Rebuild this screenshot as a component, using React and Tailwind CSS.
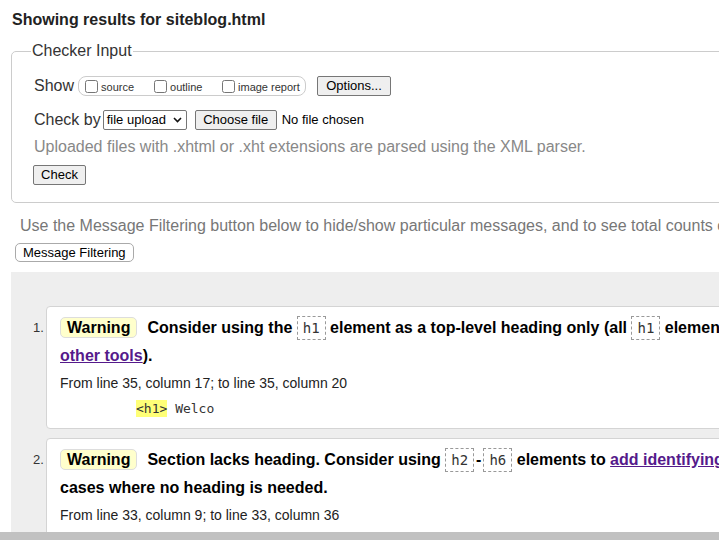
import React from 'react';

const Btn = ({ children, className = '' }) => (
    <button className={`h-[20px] border border-[#767676] bg-[#efefef] rounded-[2px] text-[13px] leading-[18px] text-black ${className}`}>
        {children}
    </button>
);

const Code = ({ children }) => (
    <code className="inline-block border border-dashed border-[#999] px-[5px] leading-[22px] text-[14px] font-normal text-[#333] font-['DejaVu_Sans_Mono',monospace]">
        {children}
    </code>
);

const Badge = () => (
    <span className="inline-block bg-[#ffffcc] border border-[#ddd] rounded-[5px] px-[6px] leading-[19px] mr-[10px]">Warning</span>
);

const Link = ({ children }) => (
    <a href="#" className="text-[#551a8b] underline">{children}</a>
);

const Message = ({ num, children, from, extract }) => (
    <li className="flex mb-[9px]">
        <span className="w-[13px] shrink-0 pt-[8px] text-[13px] leading-[28px] text-[#333]">{num}.</span>
        <div className="flex-1 bg-white border border-[#d4d4d4] rounded-[4px] pl-[13px] pt-[7px] pb-[10px]">
            <p className="font-bold text-[16px] leading-[28px] text-black whitespace-nowrap">{children}</p>
            <p className="mt-[4px] text-[14px] leading-[18px] text-[#222]">{from}</p>
            {extract && (
                <p className="mt-[8px] ml-[76px] text-[13px] leading-[18px] text-[#333] font-['DejaVu_Sans_Mono',monospace]">
                    <span className="bg-[#ffff77] py-[1px]">&lt;h1&gt;</span> {extract}
                </p>
            )}
        </div>
    </li>
);

export default function App() {
    return (
        <div className="w-[719px] h-[540px] overflow-hidden flex flex-col bg-white font-['Liberation_Sans',Arial,sans-serif] text-[#222]">
            <div className="flex-1 min-h-0 overflow-hidden">
                <div className="w-[1100px]">
                    {/* Title */}
                    <h2 className="pt-[10px] pl-[12px] text-[16px] font-bold leading-[20px] text-[#222]">Showing results for siteblog.html</h2>

                    {/* Checker input */}
                    <fieldset className="mt-[11px] ml-[11px] border border-[#ccc] rounded-[5px] pl-[22px] pb-[16px]">
                        <legend className="ml-[-3px] px-[1px] text-[16px] leading-[20px] text-[#333]">Checker Input</legend>

                        <div className="mt-[15px] flex items-center h-[20px]">
                            <span className="text-[16px] text-[#333]">Show</span>
                            <div className="ml-[4px] w-[228px] h-[20px] border border-[#ccc] rounded-[8px] flex items-center pl-[6px] text-[11px] text-[#333]">
                                <label className="w-[69px] flex items-center gap-[3px]"><input type="checkbox" className="w-[13px] h-[13px]" /><span className="mt-[3px]">source</span></label>
                                <label className="w-[68px] flex items-center gap-[3px]"><input type="checkbox" className="w-[13px] h-[13px]" /><span className="mt-[3px]">outline</span></label>
                                <label className="flex items-center gap-[3px]"><input type="checkbox" className="w-[13px] h-[13px]" /><span className="mt-[3px]">image report</span></label>
                            </div>
                            <Btn className="ml-[11px] w-[74px]">Options...</Btn>
                        </div>

                        <div className="mt-[14px] flex items-center h-[20px]">
                            <span className="text-[16px] text-[#333]">Check by</span>
                            <div className="ml-[2px] w-[84px] h-[20px] border border-[#767676] rounded-[2px] bg-white flex items-center justify-between pl-[3px] pr-[4px] text-[13px] text-black">
                                <span>file upload</span>
                                <svg width="9" height="6" viewBox="0 0 9 6" fill="none"><path d="M1 1l3.5 3.5L8 1" stroke="#111" strokeWidth="1.6" /></svg>
                            </div>
                            <Btn className="ml-[8px] w-[82px]">Choose file</Btn>
                            <span className="ml-[5px] text-[13px] text-black">No file chosen</span>
                        </div>

                        <p className="mt-[7px] text-[16px] leading-[20px] text-[#888]">Uploaded files with .xhtml or .xht extensions are parsed using the XML parser.</p>

                        <Btn className="mt-[8px] ml-[-1px] w-[53px]">Check</Btn>
                    </fieldset>

                    {/* Filtering */}
                    <p className="mt-[13px] pl-[20px] text-[16px] leading-[20px] text-[#777]">Use the Message Filtering button below to hide/show particular messages, and to see total counts of errors and warnings.</p>
                    <button className="mt-[7px] ml-[15px] h-[19px] px-[7px] border border-[#aaa] rounded-[5px] bg-white text-[13px] leading-[17px] text-black">Message Filtering</button>

                    {/* Results */}
                    <div className="mt-[8px] ml-[11px] bg-[#eeeeee] pt-[34px] pl-[22px] pb-[40px]">
                        <ol>
                            <Message
                                num={1}
                                from="From line 35, column 17; to line 35, column 20"
                                extract="Welco"
                            >
                                <Badge />Consider using the <Code>h1</Code> element as a top-level heading only (all <Code>h1</Code> elements are treated as top-level headings by many screen readers and<br />
                                <Link>other tools</Link>).
                            </Message>
                            <Message
                                num={2}
                                from="From line 33, column 9; to line 33, column 36"
                                extract="Welco"
                            >
                                <Badge />Section lacks heading. Consider using <Code>h2</Code><span className="mx-[2px]">-</span><Code>h6</Code> elements to <Link>add identifying headings</Link> to all sections, or else use a div element instead for any<br />
                                cases where no heading is needed.
                            </Message>
                        </ol>
                    </div>
                </div>
            </div>
            {/* Horizontal scrollbar */}
            <div className="h-[8px] shrink-0 bg-[#c1c1c1]" />
        </div>
    );
}
